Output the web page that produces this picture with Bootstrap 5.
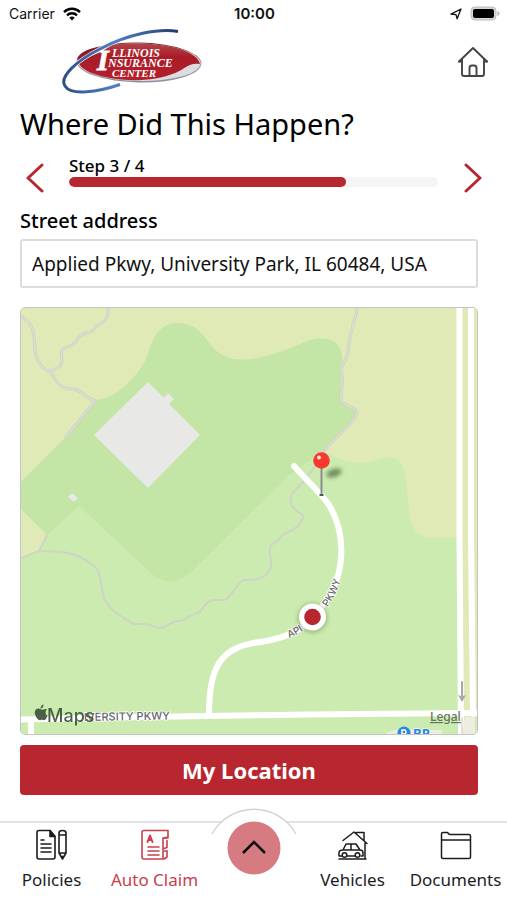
<!DOCTYPE html>
<html lang="en">
<head>
<meta charset="utf-8">
<meta name="viewport" content="width=device-width, initial-scale=1">
<title>Where Did This Happen?</title>
<link href="https://cdn.jsdelivr.net/npm/bootstrap@5.3.0/dist/css/bootstrap.min.css" rel="stylesheet">
<style>
  :root { --brand: #b82730; }
  body { font-family: "Noto Sans", "Open Sans", sans-serif; color: #111; background: #fff; }
  svg { display: block; }
  .status { font-family: Inter, "Liberation Sans", sans-serif; font-size: 14px; line-height: 28px; padding: 0 7px 0 9px; }
  .clock { font-size: 15px; }
  .side { flex: 1 1 0; }
  .brandbar { padding: 0 18px 0 61px; height: 68px; }
  .home { padding: 0 0 3px; }
  .content { padding: 0 29px 0 20px; }
  .title { font-size: 29px; line-height: 40px; margin: 8px 0 0; font-weight: 400; color: #000; }
  .stepper { padding: 12px 0 0 6px; margin-right: -4px; }
  .step-arrow { margin-top: 7px; }
  .step-track { margin: 0 26px 0 25px; }
  .step-label { font-size: 17px; line-height: 20px; font-weight: 500; color: #000; }
  .progress { height: 10px; border-radius: 5px; background: #f5f5f6; margin-top: 1px; }
  .progress-bar { background: var(--brand); border-radius: 5px; }
  .field-label { font-size: 20px; line-height: 28px; font-weight: 500; color: #000; margin: 14px 0 4px; }
  .address { height: 49px; font-size: 19px; color: #111; border: 2px solid #dcdcdc; border-radius: 3px; padding: 0 10px; }
  .map { margin-top: 19px; border: 1px solid #c4c4c4; border-radius: 5px; overflow: hidden; }
  .map svg { width: 100%; height: auto; }
  .btn-brand { --bs-btn-bg: #b82730; --bs-btn-color: #fff; --bs-btn-hover-bg: #a2212a; --bs-btn-hover-color: #fff; --bs-btn-active-bg: #8f1d25; --bs-btn-active-color: #fff;
    height: 50px; font-size: 22px; line-height: 30px; font-weight: 700; border: 0; border-radius: 4px; margin-top: 10px; padding: 0; }
  .tabs { border-top: 2px solid #e2e2e3; height: 79px; margin-top: 26px; }
  .tab { flex: 1 1 0; color: #1c1c1e; font-size: 17px; line-height: 24px; padding-top: 6px; text-decoration: none; white-space: nowrap; }
  .tab svg { margin-bottom: 5px; }
  .tab.active { color: #c9404d; }
  .fab { width: 95px; margin-top: -15px; }
</style>
<script src="https://cdn.jsdelivr.net/npm/bootstrap@5.3.0/dist/js/bootstrap.bundle.min.js"></script>
</head>
<body>
<div class="d-flex flex-column min-vh-100">
  <div class="status d-flex align-items-center">
    <div class="side d-flex align-items-center gap-2">Carrier
      <svg width="18" height="14" viewBox="0 0 18 14"><g fill="none" stroke="#000" stroke-width="2.4"><path d="M1 5.1a11.4 11.4 0 0 1 16 0"/><path d="M4 8.3a7.2 7.2 0 0 1 10 0"/></g><path d="M9 13.4 6.3 10.7a3.9 3.9 0 0 1 5.4 0z"/></svg>
    </div>
    <div class="clock fw-semibold">10:00</div>
    <div class="side d-flex align-items-center justify-content-end gap-2">
      <svg width="12" height="12" viewBox="0 0 12 12"><path d="M1 6.2 11 1 7.1 10.8 6 6.6z" fill="none" stroke="#111" stroke-width="1.3" stroke-linejoin="round"/></svg>
      <svg width="30" height="16" viewBox="0 0 30 16"><rect x="1" y="1" width="25" height="13" rx="4" fill="#d8d8d8" stroke="#bcbcbc"/><rect x="3" y="3" width="21" height="9" rx="2"/><path d="M27.500 5v5q2-.7 2-2.500t-2-2.500z" fill="#b5b5b5"/></svg>
    </div>
  </div>

  <header class="brandbar d-flex align-items-center justify-content-between">
    <svg width="142" height="68" viewBox="61 28 142 68" role="img" aria-label="Illinois Insurance Center">
      <defs>
        <linearGradient id="red" x1="0" y1="0" x2="0" y2="1"><stop offset="0" stop-color="#b4454b"/><stop offset=".35" stop-color="#a81c28"/><stop offset="1" stop-color="#b5202d"/></linearGradient>
        <linearGradient id="rim" x1="0" y1="0" x2="0" y2="1"><stop offset="0" stop-color="#7d2a31"/><stop offset=".5" stop-color="#b9a5aa"/><stop offset="1" stop-color="#8c8f9c"/></linearGradient>
        <linearGradient id="blue" x1="0" y1="0" x2="1" y2="0"><stop offset="0" stop-color="#2e4f86"/><stop offset=".45" stop-color="#5080c4"/><stop offset="1" stop-color="#263c6e"/></linearGradient>
      </defs>
      <g transform="rotate(1 139 62.500)">
        <ellipse cx="139" cy="62.500" rx="62.500" ry="20" fill="url(#rim)"/>
        <ellipse cx="139" cy="62.300" rx="61.300" ry="18.700" fill="#dcdce2"/>
        <path d="M78 61C82 50 108 43.500 139 43.500C174 43.500 198 52 200 63C189 61 184 69 176 72C160 79 141 81 124 80C98 78 78 71 78 61z" fill="url(#red)"/>
      </g>
      <path d="M82 60C88 53 99 48 112 45L103 51z" fill="#fff" opacity=".85"/>
      <path d="M77 60C79 51 92 47 109 46.500C98 50 88 53 77 60z" fill="#8d1c27"/>
      <path d="M178 31.500C160 28 128 34 100 49C76 61 59 77 65 86C71 96 98 92 120 84.500" fill="none" stroke="#fff" stroke-width="4"/>
      <path d="M178 31.500C160 28 128 34 100 49C76 61 59 77 65 86C71 96 98 92 120 84.500" fill="none" stroke="url(#blue)" stroke-width="3"/>
      <g fill="#fff" font-family="Liberation Serif, serif" font-weight="700" font-style="italic">
        <text x="97" y="69.500" font-size="30" stroke="#fff" stroke-width=".8">I</text>
        <text x="112" y="57" font-size="12">LLINOIS</text>
        <text x="108" y="67" font-size="12">NSURANCE</text>
        <text x="112" y="77" font-size="11">CENTER</text>
      </g>
    </svg>
    <button type="button" class="btn home border-0" aria-label="Home">
      <svg width="32" height="32" viewBox="0 0 32 32" fill="none" stroke="#444447" stroke-width="1.900" stroke-linejoin="round" stroke-linecap="round"><path d="M2 16.500 16 3 30 16.500"/><path d="M5 14v15q0 2 2 2h18q2 0 2-2V14M2 16.500h3M27 16.500h3"/><path d="M12.500 31v-8q0-2.500 2.500-2.500h2q2.500 0 2.500 2.500v8"/></svg>
    </button>
  </header>

  <main class="content flex-grow-1">
    <h1 class="title">Where Did This Happen?</h1>
    <div class="stepper d-flex align-items-start justify-content-between">
      <button type="button" class="btn p-0 border-0 step-arrow" aria-label="Previous step"><svg width="18" height="30" viewBox="0 0 18 30" fill="none" stroke="#b82730" stroke-width="3" stroke-linecap="round" stroke-linejoin="round"><path d="M16 2 2 15 16 28"/></svg></button>
      <div class="flex-grow-1 step-track">
        <div class="step-label" id="step">Step 3 / 4</div>
        <div class="progress" role="progressbar" aria-labelledby="step" aria-valuenow="75" aria-valuemin="0" aria-valuemax="100"><div class="progress-bar" style="width:75%"></div></div>
      </div>
      <button type="button" class="btn p-0 border-0 step-arrow" aria-label="Next step"><svg width="18" height="30" viewBox="0 0 18 30" fill="none" stroke="#b82730" stroke-width="3" stroke-linecap="round" stroke-linejoin="round"><path d="M2 2 16 15 2 28"/></svg></button>
    </div>

    <label class="field-label d-block" for="address">Street address</label>
    <input class="form-control address" id="address" type="text" value="Applied Pkwy, University Park, IL 60484, USA">

    <div class="map">
      <svg viewBox="21 308 456 426" role="img" aria-label="Map of Applied Pkwy">
        <defs>
          <filter id="soft" x="-50%" y="-50%" width="200%" height="200%"><feGaussianBlur stdDeviation="2.200"/></filter>
          <path id="applied" d="M289 638C313 629 332 606 339 585C343 573 346 560 346 548"/>
        </defs>
        <rect x="21" y="308" width="456" height="426" fill="#ccebb0"/>
        <path d="M21 308H477V718H463L458 538H430C418 537 412 530 410 517L405 475C404 463 397 457 389 457C378 459 370 463 360 463C345 462 335 457 325 452L66 437L21 482z" fill="#e0eab6"/>
        <path d="M21 509 47 535 38 551 21 558z" fill="#e0eab6"/>
        <path d="M463 308h6l2 402h-7z" fill="#e0eab6"/>
        <path d="M21 482 66 437 96 400C115 399 135 379 145 361C152 344 155 323 178 323C207 324 205 350 229 358C250 364 280 353 310 340C332 334 343 344 342 361C341 375 339 390 342 402C350 407 357 409 357 414C352 424 335 436 325 450L288 476 192 571C180 584 163 585 151 573L79 506 47 535 21 509z" fill="#c3e5a5"/>
        <path d="M148 382 164 398 168 393 174 399 169 404 200 435 148 488 94 435z" fill="#e8e8e7"/>
        <path d="m68 497 4-4 6 5-4 4z" fill="#e8e8e7"/>
        <g fill="none" stroke-linejoin="round" stroke-linecap="round">
          <path stroke="#cdcfc4" stroke-width="3" d="M22 317C35 325 34 335 35 351C37 362 42 369 50 371C58 384 60 388 72 389C84 390 84 398 95 401L66 437M50 371C70 366 58 355 62 350C66 345 72 350 78 338C84 331 92 335 96 326C103 323 109 320 108 308M357 308C357 320 352 320 353 327C350 335 349 339 348 350C348 360 341 364 341 371C345 380 340 390 341 401C344 407 357 406 357 414C352 424 336 436 325 450"/>
          <path stroke="#dddfd3" stroke-width="1.500" d="M22 317C35 325 34 335 35 351C37 362 42 369 50 371C58 384 60 388 72 389C84 390 84 398 95 401L66 437M50 371C70 366 58 355 62 350C66 345 72 350 78 338C84 331 92 335 96 326C103 323 109 320 108 308M357 308C357 320 352 320 353 327C350 335 349 339 348 350C348 360 341 364 341 371C345 380 340 390 341 401C344 407 357 406 357 414C352 424 336 436 325 450"/>
          <path stroke="#cfd5c3" stroke-width="2.200" d="M325 450C320 460 318 463 313 469L304 481C298 489 289 491 291 504C295 513 306 514 303 518C298 530 291 530 282 535C280 543 269 542 270 549C269 560 274 562 269 571C262 581 252 580 243 580C234 587 230 600 224 600H212C204 602 203 612 196 614C188 615 187 620 180 621C171 620 168 628 160 628C154 628 152 624 144 624H134C122 617 108 609 104 598C100 585 102 569 91 564C75 551 58 551 39 551L22 558M39 551 47 535"/>
          <g stroke="#fff">
            <path d="M21 719.500Q200 715 477 713" stroke-width="6"/>
            <path d="M31 720v16M209 714C209 667 221 649 253 643C294 638 310 626 325 602C345 575 347 535 329 505C324 497 315 489 294 466" stroke-width="6"/>
            <path d="M459.500 306v230l1.500 200" stroke-width="6"/>
            <path d="M471 306v230l2 178" stroke-width="6"/>
          </g>
          <path d="M465 717h10v18h-13z" fill="#ededdf"/>
          <path d="M462 682v18" stroke="#aaa9a6" stroke-width="2"/>
          <path d="M462 718v16" stroke="#bfc6b4" stroke-width="1"/>
        </g>
        <path d="M458 695q4 2 8 0l-4 7z" fill="#aaa9a6"/>
        <g font-family="Inter, sans-serif" font-size="10" font-weight="500" fill="#66676c" stroke="#fff" stroke-width="1.500" paint-order="stroke">
          <text><textPath href="#applied" startOffset="0">API</textPath></text>
          <text><textPath href="#applied" startOffset="50">PKWY</textPath></text>
          <text x="84" y="721" font-size="11" transform="rotate(-1 84 721)">IVERSITY PKWY</text>
        </g>
        <g fill="#3c5138" opacity=".9">
          <path d="M43.500 709.500c1.500-1 3-.6 3.600 0-2.300 1.700-1.800 5.300.5 6.300-1 2.600-2.300 4.600-4 4.500-1.200-.6-1.900-.6-3.200 0-3.100.5-6-6.200-5.700-8 .6-4.200 4-4.200 5.500-3.200 1.400.6 1.900.8 3.300.4zM40.500 708.400c0-2 1.300-3.500 3-4 .3 2-1.200 4-3 4z"/>
          <text x="47" y="722" font-family="Inter, sans-serif" font-size="18" font-weight="500">Maps</text>
        </g>
        <text x="430" y="721" font-family="Noto Sans, sans-serif" font-size="12" font-weight="500" fill="#667460" text-decoration="underline">Legal</text>
        <path d="M386 733l8-3h48v5h-56z" fill="#ececdf"/>
        <circle cx="404" cy="733" r="6.500" fill="#2b86e0"/>
        <path d="M402 735v-5h3q2 2 0 4h-3" fill="none" stroke="#fff" stroke-width="1.500"/>
        <text x="413" y="738" font-family="Noto Sans, sans-serif" font-size="13" font-weight="700" fill="#2b86e0" stroke="#fff" stroke-width="1" paint-order="stroke">BP</text>
        <ellipse cx="334" cy="473" rx="8" ry="4" transform="rotate(-18 334 473)" fill="#3f5b31" opacity=".65" filter="url(#soft)"/>
        <path d="M321.500 467v28" stroke="#8b8e91" stroke-width="2"/><path d="M319.500 495h4" stroke="#55585c" stroke-width="2"/>
        <circle cx="321.500" cy="460.500" r="8.300" fill="#fb3830"/><circle cx="319" cy="457.500" r="2" fill="#ffe3df"/>
        <circle cx="312.500" cy="618" r="15" fill="#466a35" opacity=".35" filter="url(#soft)"/>
        <circle cx="312.500" cy="617" r="13.500" fill="#fff"/><circle cx="312.500" cy="617" r="8.300" fill="#b82730"/>
      </svg>
    </div>
    <button type="button" class="btn btn-brand w-100">My Location</button>
  </main>

  <nav class="tabs d-flex" aria-label="Main">
    <a href="#" class="tab d-flex flex-column align-items-center">
      <svg width="34" height="34" viewBox="0 0 34 34" fill="none" stroke="#1c1c1e" stroke-width="1.600" stroke-linejoin="round" stroke-linecap="round"><path d="M4 1.500h11l5 6V28q0 2-2 2H4q-2 0-2-2V3.500q0-2 2-2z"/><path d="M15 1.500v6h5z" fill="#1c1c1e"/><path d="M6 11h3M6 15h10M6 19h10M6 23h10"/><path d="M24 4q0-2.500 3.500-2.500T31 4v20l-3.500 6-3.500-6zM24 24h7M24 6h7M26.500 27.500h2l-1 2z"/></svg>
      Policies
    </a>
    <a href="#" class="tab active d-flex flex-column align-items-center" aria-current="page">
      <svg width="28" height="34" viewBox="0 0 28 34" fill="none" stroke="#c9404d" stroke-width="1.600" stroke-linejoin="round" stroke-linecap="round"><path d="M22 9V30H3q-2 0-2-2V3.500q0-2 2-2h24V8l-4 1"/><path d="M23 9h4M26 11.500v7l-3 1M23 22h3.500M26 22v6l-3 2M7 18h11M7 22h11M7 26h11"/><path d="M6.500 13 9 6.500 11.500 13M7.500 11h3" stroke-width="2"/></svg>
      Auto Claim
    </a>
    <button type="button" class="fab btn p-0 border-0 align-self-start" aria-label="Open menu">
      <svg class="mx-auto" width="90" height="68" viewBox="0 0 90 68"><path d="M3 26A48 48 0 0 1 87 26L82 62H8z" fill="#fff"/><path d="M3 26A48 48 0 0 1 87 26" fill="none" stroke="#d2d2d3" stroke-width="1.300"/><circle cx="45" cy="40" r="26.500" fill="#d77b82"/><path d="M34 45 45 34 56 45" fill="none" stroke="#0c0c0c" stroke-width="2.500"/></svg>
    </button>
    <a href="#" class="tab d-flex flex-column align-items-center">
      <svg width="32" height="34" viewBox="0 0 32 34" fill="none" stroke="#1c1c1e" stroke-width="1.500" stroke-linejoin="round" stroke-linecap="round"><path d="M6 11.500 17 3l13 11.500M19 4.500V3.500h8V11M28 14v15M2 30h27"/><path d="M6 21l3-6h10l4 6M14 15v6M6 21q-4 0-4 3v3h3M23 21q3 0 3 3v3h-2M10 27h8M6 21h17"/><circle cx="7.500" cy="26" r="2.300"/><circle cx="20.500" cy="26" r="2.300"/></svg>
      Vehicles
    </a>
    <a href="#" class="tab d-flex flex-column align-items-center">
      <svg width="32" height="34" viewBox="0 0 32 34" fill="none" stroke="#1c1c1e" stroke-width="1.500" stroke-linejoin="round" stroke-linecap="round"><path d="M1.500 28V5q0-1.500 1.500-1.500h4.500Q9 5.500 10 5.500h19q1.500 0 1.500 1.500v21q0 1.500-1.500 1.500H3q-1.500 0-1.500-1.500zM1.500 11h29"/></svg>
      Documents
    </a>
  </nav>
</div>
</body>
</html>
